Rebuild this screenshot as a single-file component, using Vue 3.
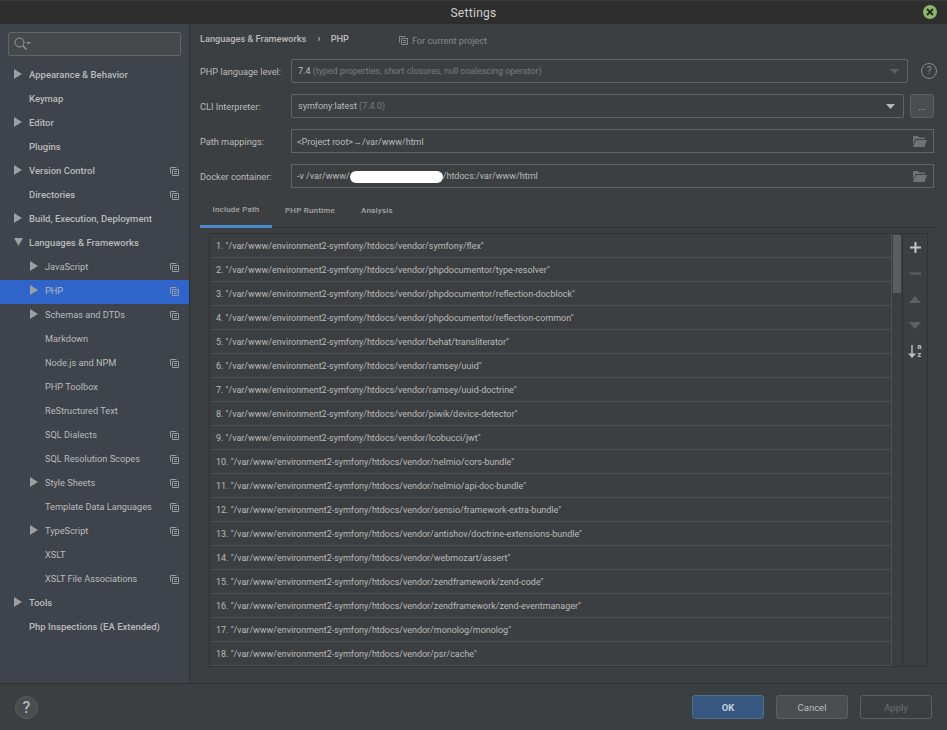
<script setup>
const tree = [
  { label: 'Appearance & Behavior', level: 0, arrow: 'right' },
  { label: 'Keymap', level: 0 },
  { label: 'Editor', level: 0, arrow: 'right' },
  { label: 'Plugins', level: 0 },
  { label: 'Version Control', level: 0, arrow: 'right', copy: true },
  { label: 'Directories', level: 0, copy: true },
  { label: 'Build, Execution, Deployment', level: 0, arrow: 'right' },
  { label: 'Languages & Frameworks', level: 0, arrow: 'down' },
  { label: 'JavaScript', level: 1, arrow: 'right', copy: true },
  { label: 'PHP', level: 1, arrow: 'right', copy: true, selected: true },
  { label: 'Schemas and DTDs', level: 1, arrow: 'right', copy: true },
  { label: 'Markdown', level: 1 },
  { label: 'Node.js and NPM', level: 1, copy: true },
  { label: 'PHP Toolbox', level: 1 },
  { label: 'ReStructured Text', level: 1 },
  { label: 'SQL Dialects', level: 1, copy: true },
  { label: 'SQL Resolution Scopes', level: 1, copy: true },
  { label: 'Style Sheets', level: 1, arrow: 'right', copy: true },
  { label: 'Template Data Languages', level: 1, copy: true },
  { label: 'TypeScript', level: 1, arrow: 'right', copy: true },
  { label: 'XSLT', level: 1 },
  { label: 'XSLT File Associations', level: 1, copy: true },
  { label: 'Tools', level: 0, arrow: 'right' },
  { label: 'Php Inspections (EA Extended)', level: 0 }
]

const base = '/var/www/environment2-symfony/htdocs/vendor/'
const paths = [
  'symfony/flex',
  'phpdocumentor/type-resolver',
  'phpdocumentor/reflection-docblock',
  'phpdocumentor/reflection-common',
  'behat/transliterator',
  'ramsey/uuid',
  'ramsey/uuid-doctrine',
  'piwik/device-detector',
  'lcobucci/jwt',
  'nelmio/cors-bundle',
  'nelmio/api-doc-bundle',
  'sensio/framework-extra-bundle',
  'antishov/doctrine-extensions-bundle',
  'webmozart/assert',
  'zendframework/zend-code',
  'zendframework/zend-eventmanager',
  'monolog/monolog',
  'psr/cache'
]
</script>

<template>
  <div class="dialog">
    <header class="titlebar">
      <span class="title">Settings</span>
      <span class="close">
        <svg width="8" height="8" viewBox="0 0 8 8"><path d="M1 1l6 6M7 1L1 7" stroke="#24281f" stroke-width="1.8" /></svg>
      </span>
    </header>

    <div class="main">
      <aside class="sidebar">
        <div class="search">
          <svg width="17" height="14" viewBox="0 0 17 14" fill="none">
            <circle cx="5.5" cy="5.5" r="4.5" stroke="#9a9c9e" />
            <path d="M9 9l3.5 3.5" stroke="#9a9c9e" stroke-width="1.2" />
            <path d="M12 5h5l-2.5 2.5z" fill="#8a8c8e" />
          </svg>
        </div>
        <ul class="tree">
          <li
            v-for="item in tree"
            :key="item.label"
            class="node"
            :class="{ selected: item.selected, child: item.level === 1, top: item.level === 0 }"
          >
            <span class="arrow-slot">
              <svg v-if="item.arrow === 'right'" width="8" height="10" viewBox="0 0 8 10"><path d="M0 0l8 5-8 5z" fill="#9c9e9f" /></svg>
              <svg v-else-if="item.arrow === 'down'" width="9" height="8" viewBox="0 0 9 8"><path d="M0 0h9L4.5 8z" fill="#9c9e9f" /></svg>
            </span>
            <span class="node-label">{{ item.label }}</span>
            <svg v-if="item.copy" class="copy" width="9" height="9" viewBox="0 0 9 9" fill="none" stroke="#9a9c9e">
              <path d="M.5 6.5v-6h6" />
              <path d="M2.5 2.5h6v6h-6zM4 4.5h3M4 6.5h3" />
            </svg>
          </li>
        </ul>
      </aside>

      <section class="content">
        <div class="breadcrumb">
          <span class="crumb">Languages &amp; Frameworks</span>
          <span class="crumb-sep">›</span>
          <span class="crumb">PHP</span>
          <span class="scope">
            <svg width="9" height="9" viewBox="0 0 9 9" fill="none" stroke="#85878a">
              <path d="M.5 6.5v-6h6" />
              <path d="M2.5 2.5h6v6h-6zM4 4.5h3M4 6.5h3" />
            </svg>
            For current project
          </span>
        </div>

        <div class="form-row">
          <label>PHP language level:</label>
          <div class="field select disabled">
            <span class="value">7.4 <em>(typed properties, short closures, null coalescing operator)</em></span>
            <svg width="9" height="5" viewBox="0 0 9 5"><path d="M0 0h9L4.5 5z" fill="#5d5f61" /></svg>
          </div>
          <span class="help-small">?</span>
        </div>
        <div class="form-row">
          <label>CLI Interpreter:</label>
          <div class="field select">
            <span class="value">symfony:latest <em>(7.4.0)</em></span>
            <svg width="9" height="5" viewBox="0 0 9 5"><path d="M0 0h9L4.5 5z" fill="#b5b6b7" /></svg>
          </div>
          <button class="dots">...</button>
        </div>
        <div class="form-row">
          <label>Path mappings:</label>
          <div class="field wide">
            <span class="value">&lt;Project root&gt;→/var/www/html</span>
            <svg class="folder" width="15" height="12" viewBox="0 0 15 12"><path d="M1 1h5l1 1.5h6V4H3.5L1 10z" fill="#6e7476" /><path d="M4 5h11l-2.5 7H1z" fill="#6e7476" /></svg>
          </div>
        </div>
        <div class="form-row">
          <label>Docker container:</label>
          <div class="field wide">
            <span class="value">-v /var/www/<i class="redacted"></i>/htdocs:/var/www/html</span>
            <svg class="folder" width="15" height="12" viewBox="0 0 15 12"><path d="M1 1h5l1 1.5h6V4H3.5L1 10z" fill="#6e7476" /><path d="M4 5h11l-2.5 7H1z" fill="#6e7476" /></svg>
          </div>
        </div>

        <nav class="tabs">
          <span class="tab active">Include Path</span>
          <span class="tab">PHP Runtime</span>
          <span class="tab">Analysis</span>
        </nav>

        <div class="list-box">
          <ol class="paths">
            <li v-for="(path, index) in paths" :key="path" class="path-row">{{ index + 1 }}. "{{ base + path }}"</li>
          </ol>
          <div class="scrollbar"><div class="thumb"></div></div>
          <div class="toolbar">
            <svg width="11" height="11" viewBox="0 0 11 11"><path d="M5.5 0v11M0 5.5h11" stroke="#c4c5c6" stroke-width="2" /></svg>
            <svg width="11" height="11" viewBox="0 0 11 11"><path d="M0 5.5h11" stroke="#5f6163" stroke-width="2" /></svg>
            <svg width="12" height="7" viewBox="0 0 12 7"><path d="M6 0l6 7H0z" fill="#5f6163" /></svg>
            <svg width="12" height="7" viewBox="0 0 12 7"><path d="M0 0h12L6 7z" fill="#5f6163" /></svg>
            <span class="sort">
              <svg width="8" height="13" viewBox="0 0 8 13"><path d="M4 0v11" stroke="#c0c1c2" stroke-width="1.4" /><path d="M0 8.5h8L4 13z" fill="#c0c1c2" /></svg>
              <span class="sort-letters"><b>a</b><b>z</b></span>
            </span>
          </div>
        </div>
      </section>
    </div>

    <footer class="footer">
      <span class="help">?</span>
      <div class="buttons">
        <button class="btn ok">OK</button>
        <button class="btn cancel">Cancel</button>
        <button class="btn apply">Apply</button>
      </div>
    </footer>
  </div>
</template>

<style>
html, body {
  background: #3c3f41;
}
</style>

<style scoped>
.dialog {
  width: 947px;
  height: 730px;
  display: flex;
  flex-direction: column;
  background: #3c3f41;
  color: #bbbbbb;
  font-family: Roboto, "Liberation Sans", sans-serif;
  font-size: 9.2px;
  overflow: hidden;
}

.titlebar {
  height: 24px;
  flex: none;
  display: flex;
  align-items: center;
  justify-content: center;
  position: relative;
  background: #2e2e2e;
  border-top: 1px solid #3a3a3a;
  box-sizing: border-box;
}

.title {
  font-size: 12px;
  letter-spacing: 0.3px;
  color: #d0d0d0;
}

.close {
  position: absolute;
  right: 10px;
  top: 4px;
  width: 14px;
  height: 14px;
  border-radius: 50%;
  background: #8db56b;
  display: flex;
  align-items: center;
  justify-content: center;
}

.main {
  height: 660px;
  flex: none;
  display: flex;
  min-height: 0;
  box-sizing: border-box;
  border-bottom: 1px solid #323232;
}

.sidebar {
  width: 190px;
  flex: none;
  box-sizing: border-box;
  background: #3e434c;
  border-right: 1px solid #323232;
  padding-top: 8px;
}

.search {
  margin: 0 8px;
  height: 24px;
  box-sizing: border-box;
  border: 1px solid #646464;
  border-radius: 2px;
  background: #45494a;
  display: flex;
  align-items: center;
  padding-left: 5px;
}

.tree {
  list-style: none;
  margin: 8px 0 0;
  padding: 0;
}

.node {
  height: 24px;
  display: flex;
  align-items: center;
  padding-right: 10px;
  padding-bottom: 4px;
  box-sizing: border-box;
}

.node.selected {
  background: #2f65ca;
}

.arrow-slot {
  width: 15px;
  margin-left: 14px;
  flex: none;
  display: flex;
  align-items: center;
}

.node.child .arrow-slot {
  margin-left: 30px;
}

.node.top .node-label {
  font-size: 9.5px;
  font-weight: 500;
}

.node-label {
  flex: 1;
  white-space: nowrap;
}

.copy {
  flex: none;
  margin-top: 3px;
}

.content {
  flex: 1;
  min-width: 0;
  box-sizing: border-box;
  padding: 0 10px;
}

.breadcrumb {
  height: 35px;
  display: flex;
  align-items: center;
  padding-bottom: 7px;
  box-sizing: border-box;
}

.crumb {
  font-weight: 500;
}

.crumb-sep {
  margin: 0 10px 0 11px;
  font-size: 11px;
}

.scope {
  margin-left: 50px;
  margin-top: 5px;
  display: inline-flex;
  align-items: center;
  gap: 4px;
  color: #85878a;
}

.form-row {
  display: flex;
  align-items: center;
  height: 24px;
  margin-bottom: 11px;
}

.form-row label {
  width: 91px;
  flex: none;
}

.field {
  height: 24px;
  box-sizing: border-box;
  border: 1px solid #646464;
  display: flex;
  align-items: center;
  justify-content: space-between;
  padding: 0 6px;
  flex: 1;
}

.value {
  font-size: 9px;
}

.field.select {
  border-radius: 2px;
  background: #3c3f41;
  padding-right: 8px;
}

.field.disabled em {
  letter-spacing: -0.06px;
}

.field.wide {
  padding-left: 5px;
  margin-right: 3px;
}

.field.wide .value {
  padding-top: 1px;
}

.field em {
  font-style: normal;
  color: #797b7d;
}

.redacted {
  display: inline-block;
  width: 93px;
  height: 12px;
  border-radius: 6px;
  background: #fff;
  vertical-align: middle;
}

.help-small {
  width: 14px;
  height: 14px;
  margin-left: 13px;
  border: 1px solid #87898b;
  border-radius: 50%;
  font-size: 10px;
  line-height: 14px;
  text-align: center;
  color: #87898b;
  flex: none;
}

.dots {
  width: 24px;
  height: 24px;
  margin: 0 3px 0 6px;
  flex: none;
  padding: 0;
  border: 1px solid #5e6060;
  border-radius: 3px;
  background: #4b4e50;
  color: #bbbbbb;
  font: inherit;
}

.tabs {
  display: flex;
  height: 29px;
  border-bottom: 1px solid #323232;
  box-sizing: border-box;
}

.tab {
  padding: 0 13px;
  display: flex;
  align-items: center;
  font-size: 8px;
  font-weight: 500;
  letter-spacing: 0.2px;
  height: 100%;
  box-sizing: border-box;
  padding-bottom: 6px;
  color: #a4a6a8;
}

.tab.active {
  width: 72px;
  justify-content: center;
  padding-left: 0;
  padding-right: 0;
  border-bottom: 3px solid #4a88c7;
  height: 29px;
}

.list-box {
  display: flex;
  margin: 5px 9px 0;
  height: 434px;
  box-sizing: border-box;
  border: 1px solid #323232;
}

.paths {
  list-style: none;
  margin: 0;
  padding: 0;
  flex: 1;
  min-width: 0;
}

.path-row {
  height: 24px;
  box-sizing: border-box;
  display: flex;
  align-items: center;
  padding: 0 0 0 6px;
  border-bottom: 1px solid #4e5052;
  font-size: 8.96px;
  white-space: pre;
}

.scrollbar {
  width: 10px;
  flex: none;
  border-left: 1px solid #4e5052;
  border-right: 1px solid #323232;
}

.thumb {
  width: 8px;
  height: 58px;
  margin: 1px 0 0 1px;
  background: #5a5e5f;
}

.toolbar {
  width: 24px;
  flex: none;
  display: flex;
  flex-direction: column;
  align-items: center;
  padding-top: 8px;
}

.toolbar > svg {
  height: 11px;
  margin-bottom: 15px;
}

.sort {
  display: flex;
  align-items: center;
  gap: 1px;
  margin-top: -3px;
}

.sort-letters {
  display: flex;
  flex-direction: column;
  font-size: 8px;
  line-height: 8px;
  color: #c0c1c2;
}

.footer {
  flex: 1;
  display: flex;
  align-items: center;
  justify-content: space-between;
  padding: 0 15px;
}

.help {
  width: 23px;
  height: 23px;
  box-sizing: border-box;
  border-radius: 50%;
  background: #4a4d4f;
  border: 1px solid #5a5d5f;
  display: flex;
  align-items: center;
  justify-content: center;
  font-size: 16px;
  font-weight: 500;
  color: #b5b6b7;
}

.buttons {
  display: flex;
  gap: 12px;
}

.btn {
  width: 72px;
  height: 24px;
  padding: 0;
  border-radius: 3px;
  font-family: inherit;
  font-size: 9.5px;
  box-sizing: border-box;
}

.ok {
  background: #365880;
  border: 1px solid #4c708c;
  color: #c5d1dd;
  font-weight: 700;
}

.cancel {
  background: #4b4e50;
  border: 1px solid #5e6060;
  color: #bbbbbb;
}

.apply {
  background: transparent;
  border: 1px solid #5e6060;
  color: #6d6f71;
}
</style>
